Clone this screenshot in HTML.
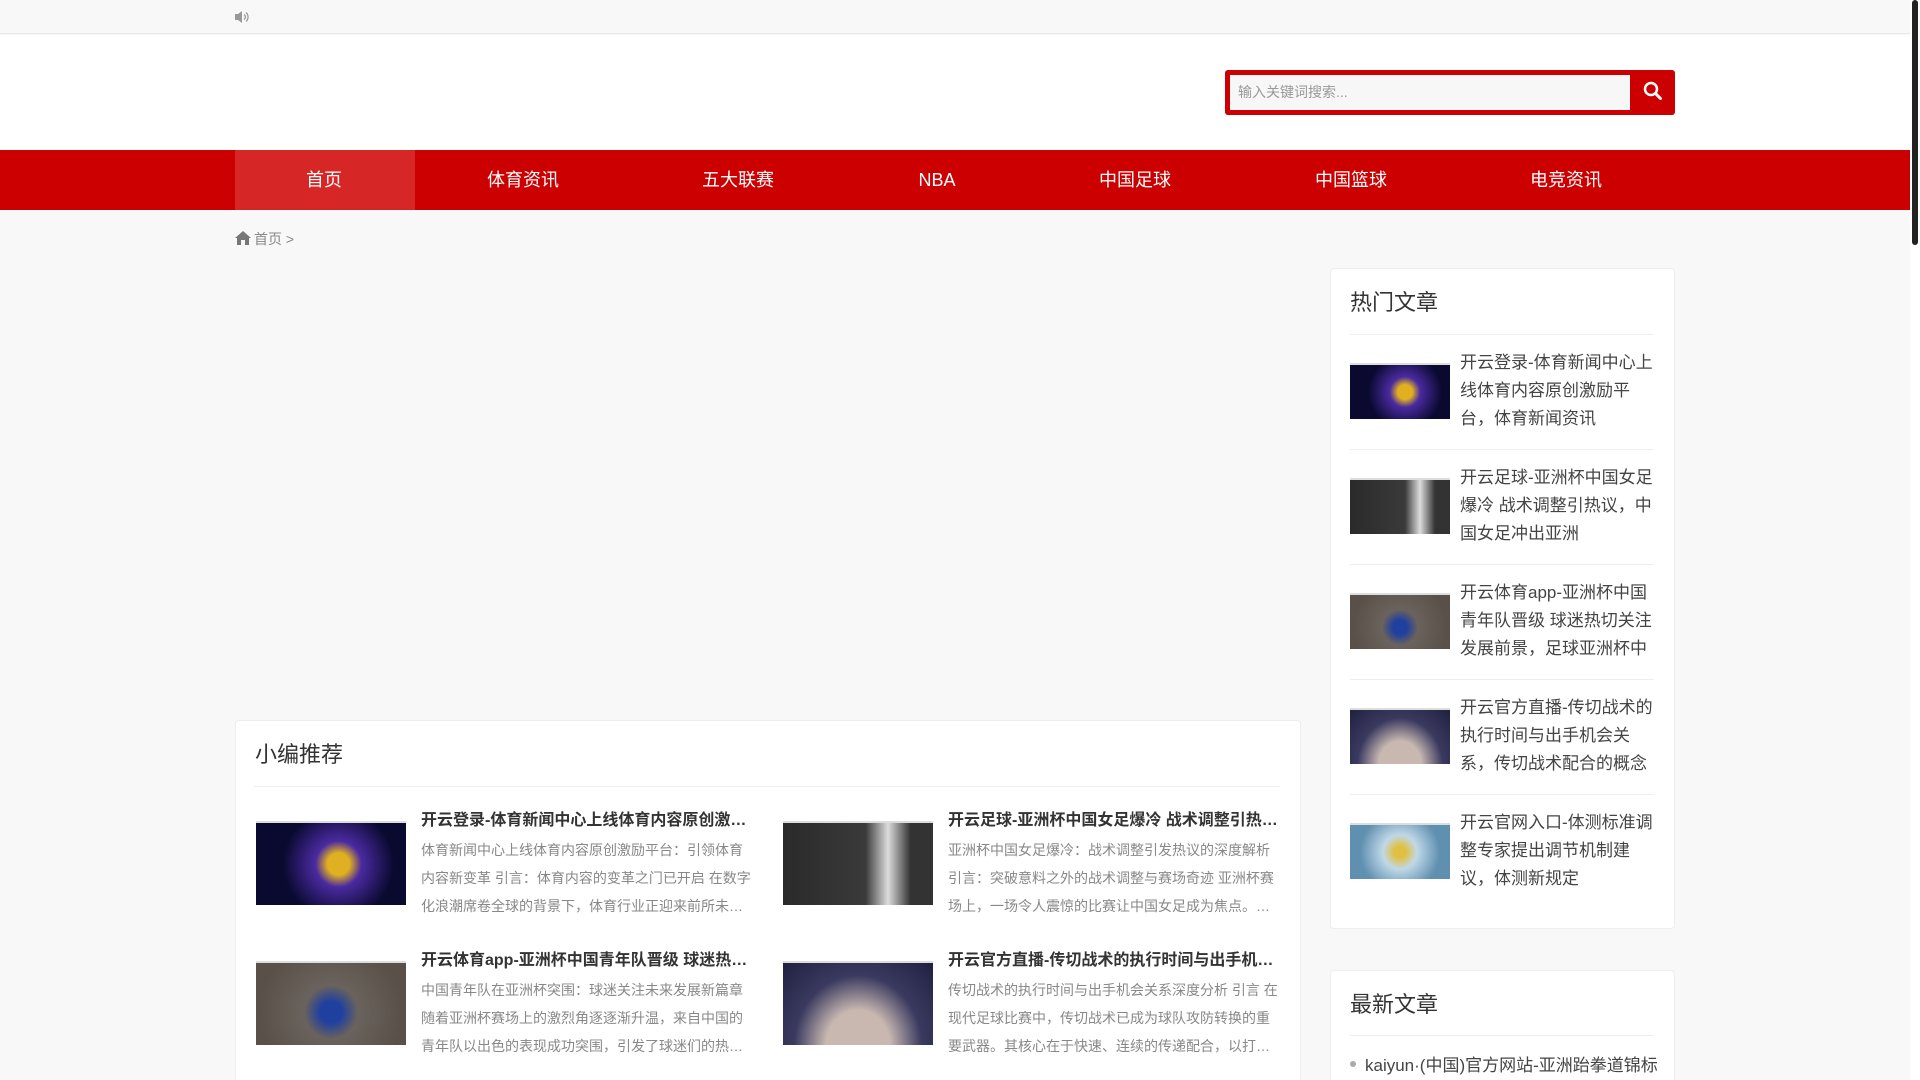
<!DOCTYPE html>
<html><head><meta charset="utf-8"><style>
*{margin:0;padding:0;box-sizing:border-box}
html,body{width:1920px;height:1080px;overflow:hidden}
body{background:#f8f8f8;font-family:"Liberation Sans","Noto Sans CJK SC",sans-serif;position:relative;color:#333}
.a{position:absolute}
.top{left:0;top:0;width:1910px;height:34px;background:#f8f8f8;border-bottom:1px solid #e8e8e8}
.head{left:0;top:35px;width:1910px;height:115px;background:#fff}
.nav{left:0;top:150px;width:1910px;height:60px;background:#cc0000}
.nav span{position:absolute;top:0;height:60px;line-height:60px;color:#fff;font-size:18px;transform:translateX(-50%)}
.box{background:#fff;border:1px solid #eee;border-radius:4px}
.h3{font-size:22px;color:#333}
.line{height:1px;background:#eee}
.img{border-top:2px solid #ddd}
.t{font-size:16px;font-weight:bold;color:#333;white-space:nowrap;overflow:hidden;text-overflow:ellipsis;line-height:24px}
.d{font-size:14px;color:#888;line-height:28px;height:84px;overflow:hidden}
.st{font-size:17px;color:#444;line-height:28px;width:200px}
</style></head><body>
<div class="a top"></div>
<svg class="a" style="left:234px;top:10px" width="18" height="14" viewBox="0 0 18 14"><path d="M1 4h3l4-3v12l-4-3H1z" fill="#999"/><path d="M10 4.5a3 3 0 0 1 0 5M12 2.5a6 6 0 0 1 0 9" stroke="#999" stroke-width="1.3" fill="none"/></svg>
<div class="a head"></div>
<div class="a" style="left:1225px;top:70px;width:450px;height:45px;background:#cc0000;border-radius:3px"></div>
<div class="a" style="left:1230px;top:75px;width:400px;height:35px;background:#f7f7f7;font-size:14px;color:#999;line-height:35px;padding-left:8px">输入关键词搜索...</div>
<svg class="a" style="left:1643px;top:81px" width="20" height="20" viewBox="0 0 20 20"><circle cx="8" cy="8" r="6" stroke="#fff" stroke-width="2.5" fill="none"/><path d="M12.5 12.5l5 5" stroke="#fff" stroke-width="3" stroke-linecap="round"/></svg>
<div class="a nav">
<div class="a" style="left:235px;top:0;width:180px;height:60px;background:#d72626"></div>
<span style="left:324px">首页</span><span style="left:523px">体育资讯</span><span style="left:738px">五大联赛</span><span style="left:937px">NBA</span><span style="left:1135px">中国足球</span><span style="left:1351px">中国篮球</span><span style="left:1566px">电竞资讯</span>
</div>
<svg class="a" style="left:235px;top:231px" width="16" height="14" viewBox="0 0 16 14"><path d="M8 0L0 7h2v7h4V9h4v5h4V7h2z" fill="#777"/></svg>
<div class="a" style="left:254px;top:229px;font-size:14px;color:#888">首页 &gt;</div>

<div class="a box" style="left:235px;top:720px;width:1066px;height:400px"></div>
<div class="a h3" style="left:255px;top:737px">小编推荐</div>
<div class="a line" style="left:254px;top:786px;width:1026px"></div>

<div class="a img" style="left:256px;top:821px;width:150px;height:84px;background:radial-gradient(circle at 55% 50%,#e0b020 0 12%,#4a2aa0 25%,#0a0a30 60%)"></div>
<div class="a t" style="left:421px;top:809px;width:330px">开云登录-体育新闻中心上线体育内容原创激励平台，体育新闻资讯</div>
<div class="a d" style="left:421px;top:836px;width:334px">体育新闻中心上线体育内容原创激励平台：引领体育内容新变革 引言：体育内容的变革之门已开启 在数字化浪潮席卷全球的背景下，体育行业正迎来前所未…</div>

<div class="a img" style="left:256px;top:961px;width:150px;height:84px;background:radial-gradient(circle at 50% 60%,#2040a0 0 12%,#6a625c 30%,#5a504a 80%)"></div>
<div class="a t" style="left:421px;top:949px;width:330px">开云体育app-亚洲杯中国青年队晋级 球迷热切关注发展前景</div>
<div class="a d" style="left:421px;top:976px;width:334px">中国青年队在亚洲杯突围：球迷关注未来发展新篇章 随着亚洲杯赛场上的激烈角逐逐渐升温，来自中国的青年队以出色的表现成功突围，引发了球迷们的热…</div>

<div class="a img" style="left:783px;top:821px;width:150px;height:84px;background:linear-gradient(90deg,#2a2a2a 0,#3a3a3a 55%,#ddd 70%,#333 85%)"></div>
<div class="a t" style="left:948px;top:809px;width:332px">开云足球-亚洲杯中国女足爆冷 战术调整引热议，中国女足冲出亚洲</div>
<div class="a d" style="left:948px;top:836px;width:335px">亚洲杯中国女足爆冷：战术调整引发热议的深度解析 引言：突破意料之外的战术调整与赛场奇迹 亚洲杯赛场上，一场令人震惊的比赛让中国女足成为焦点。…</div>

<div class="a img" style="left:783px;top:961px;width:150px;height:84px;background:radial-gradient(ellipse at 50% 100%,#c8b8b0 0 30%,#3a3a60 60%,#202040)"></div>
<div class="a t" style="left:948px;top:949px;width:332px">开云官方直播-传切战术的执行时间与出手机会关系</div>
<div class="a d" style="left:948px;top:976px;width:335px">传切战术的执行时间与出手机会关系深度分析 引言 在现代足球比赛中，传切战术已成为球队攻防转换的重要武器。其核心在于快速、连续的传递配合，以打…</div>

<div class="a box" style="left:1330px;top:268px;width:345px;height:661px"></div>
<div class="a h3" style="left:1350px;top:285px">热门文章</div>
<div class="a line" style="left:1350px;top:334px;width:304px"></div>
<div class="a img" style="left:1350px;top:363px;width:100px;height:56px;background:radial-gradient(circle at 55% 50%,#e0b020 0 12%,#4a2aa0 25%,#0a0a30 60%)"></div>
<div class="a st" style="left:1460px;top:349px">开云登录-体育新闻中心上线体育内容原创激励平台，体育新闻资讯</div>
<div class="a line" style="left:1350px;top:449px;width:304px"></div>
<div class="a img" style="left:1350px;top:478px;width:100px;height:56px;background:linear-gradient(90deg,#2a2a2a 0,#3a3a3a 55%,#ddd 70%,#333 85%)"></div>
<div class="a st" style="left:1460px;top:464px">开云足球-亚洲杯中国女足爆冷 战术调整引热议，中国女足冲出亚洲</div>
<div class="a line" style="left:1350px;top:564px;width:304px"></div>
<div class="a img" style="left:1350px;top:593px;width:100px;height:56px;background:radial-gradient(circle at 50% 60%,#2040a0 0 12%,#6a625c 30%,#5a504a 80%)"></div>
<div class="a st" style="left:1460px;top:579px;height:84px;overflow:hidden">开云体育app-亚洲杯中国青年队晋级 球迷热切关注发展前景，足球亚洲杯中国队</div>
<div class="a line" style="left:1350px;top:679px;width:304px"></div>
<div class="a img" style="left:1350px;top:708px;width:100px;height:56px;background:radial-gradient(ellipse at 50% 100%,#c8b8b0 0 30%,#3a3a60 60%,#202040)"></div>
<div class="a st" style="left:1460px;top:694px">开云官方直播-传切战术的执行时间与出手机会关系，传切战术配合的概念</div>
<div class="a line" style="left:1350px;top:794px;width:304px"></div>
<div class="a img" style="left:1350px;top:823px;width:100px;height:56px;background:radial-gradient(circle at 50% 50%,#e0c040 0 10%,#c0d8e8 30%,#6090b0 70%)"></div>
<div class="a st" style="left:1460px;top:809px">开云官网入口-体测标准调整专家提出调节机制建议，体测新规定</div>

<div class="a box" style="left:1330px;top:970px;width:345px;height:130px"></div>
<div class="a h3" style="left:1350px;top:987px">最新文章</div>
<div class="a line" style="left:1350px;top:1035px;width:304px"></div>
<div class="a" style="left:1350px;top:1061px;width:6px;height:6px;border-radius:50%;background:#aaa"></div>
<div class="a" style="left:1365px;top:1051px;font-size:17px;color:#444;white-space:nowrap">kaiyun·(中国)官方网站-亚洲跆拳道锦标</div>

<div class="a" style="left:1910px;top:0;width:10px;height:1080px;background:#fff"></div>
<div class="a" style="left:1912px;top:0;width:6px;height:245px;background:#222;border-radius:3px"></div>
</body></html>
